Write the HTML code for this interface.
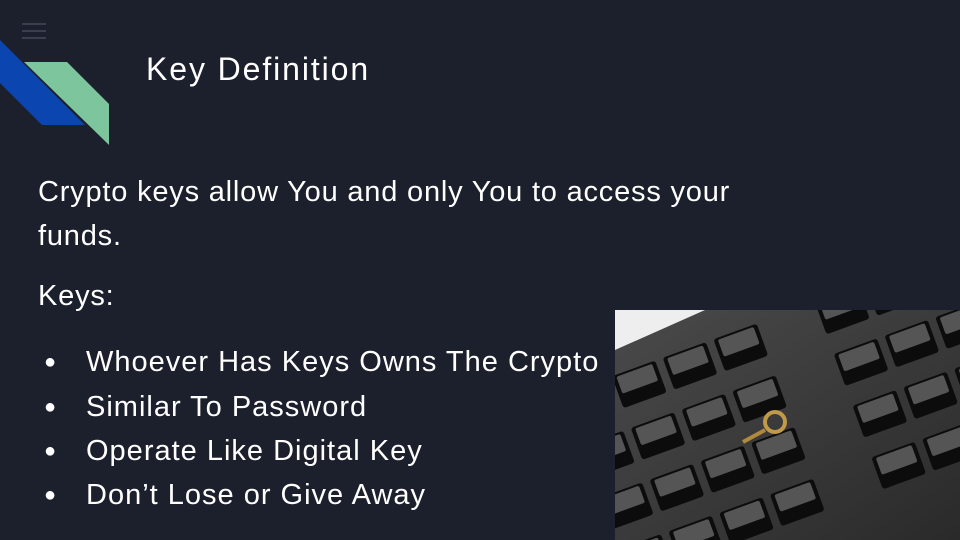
<!DOCTYPE html>
<html style="overflow:hidden"><head><style>
html,body{margin:0;width:960px;height:540px;overflow:hidden}
body{background:#1c202d;font-family:"Liberation Sans",sans-serif;color:#fff;position:relative}
.t{position:absolute;white-space:nowrap}
.b{position:absolute;left:86px;font-size:29px;letter-spacing:1px;white-space:nowrap;line-height:34px}
.d{position:absolute;left:44px;font-size:20px;line-height:34px}
</style></head><body>
<svg width="120" height="150" style="position:absolute;left:0;top:0">
<g stroke="#3a3f4d" stroke-width="2"><line x1="22" y1="24" x2="46" y2="24"/><line x1="22" y1="31" x2="46" y2="31"/><line x1="22" y1="38" x2="46" y2="38"/></g>
<polygon points="0,40 85,125 42,125 0,83" fill="#0b45b0"/>
<polygon points="24,62 67,62 109,104 109,145" fill="#7cc59d"/>
</svg>
<div class="t" style="left:146px;top:51px;font-size:32px;letter-spacing:1.9px">Key Definition</div>
<div class="t" style="left:38px;top:170px;font-size:29px;letter-spacing:0.8px;line-height:44px">Crypto keys allow You and only You to access your<br>funds.</div>
<div class="t" style="left:38px;top:280px;font-size:29px;letter-spacing:0.8px">Keys:</div>
<div class="d" style="top:345px">●</div><div class="b" style="top:345px">Whoever Has Keys Owns The Crypto</div>
<div class="d" style="top:390px">●</div><div class="b" style="top:390px">Similar To Password</div>
<div class="d" style="top:434px">●</div><div class="b" style="top:434px">Operate Like Digital Key</div>
<div class="d" style="top:478px">●</div><div class="b" style="top:478px">Don’t Lose or Give Away</div>
<div style="position:absolute;left:615px;top:310px;width:345px;height:230px;overflow:hidden">
<svg width="345" height="230" style="display:block" viewBox="0 0 345 230">
<defs><linearGradient id="g" x1="0" y1="0" x2="1" y2="1"><stop offset="0" stop-color="#4a4a4a"/><stop offset="1" stop-color="#2a2a2a"/></linearGradient></defs>
<rect width="345" height="230" fill="url(#g)"/>
<polygon points="0,0 90,0 0,40" fill="#eeeeee"/>
<g transform="rotate(-20 170 115)">
<g id="r">
<rect x="-30" y="10" width="46" height="34" rx="3" fill="#0c0c0c"/><rect x="24" y="10" width="46" height="34" rx="3" fill="#0c0c0c"/><rect x="78" y="10" width="46" height="34" rx="3" fill="#0c0c0c"/><rect x="132" y="10" width="46" height="34" rx="3" fill="#0c0c0c"/><rect x="240" y="10" width="46" height="34" rx="3" fill="#0c0c0c"/><rect x="294" y="10" width="46" height="34" rx="3" fill="#0c0c0c"/><rect x="348" y="10" width="46" height="34" rx="3" fill="#0c0c0c"/>
<rect x="-26" y="12" width="38" height="18" rx="2" fill="#555"/><rect x="28" y="12" width="38" height="18" rx="2" fill="#555"/><rect x="82" y="12" width="38" height="18" rx="2" fill="#555"/><rect x="136" y="12" width="38" height="18" rx="2" fill="#555"/><rect x="244" y="12" width="38" height="18" rx="2" fill="#555"/><rect x="298" y="12" width="38" height="18" rx="2" fill="#555"/><rect x="352" y="12" width="38" height="18" rx="2" fill="#555"/>
</g>
<use href="#r" y="55"/><use href="#r" y="110"/><use href="#r" y="165"/>
</g>
<path d="M128 132 L150 120" stroke="#b08a3a" stroke-width="4"/>
<circle cx="160" cy="112" r="10" fill="none" stroke="#c09a48" stroke-width="4"/>
</svg>
</div>
</body></html>
